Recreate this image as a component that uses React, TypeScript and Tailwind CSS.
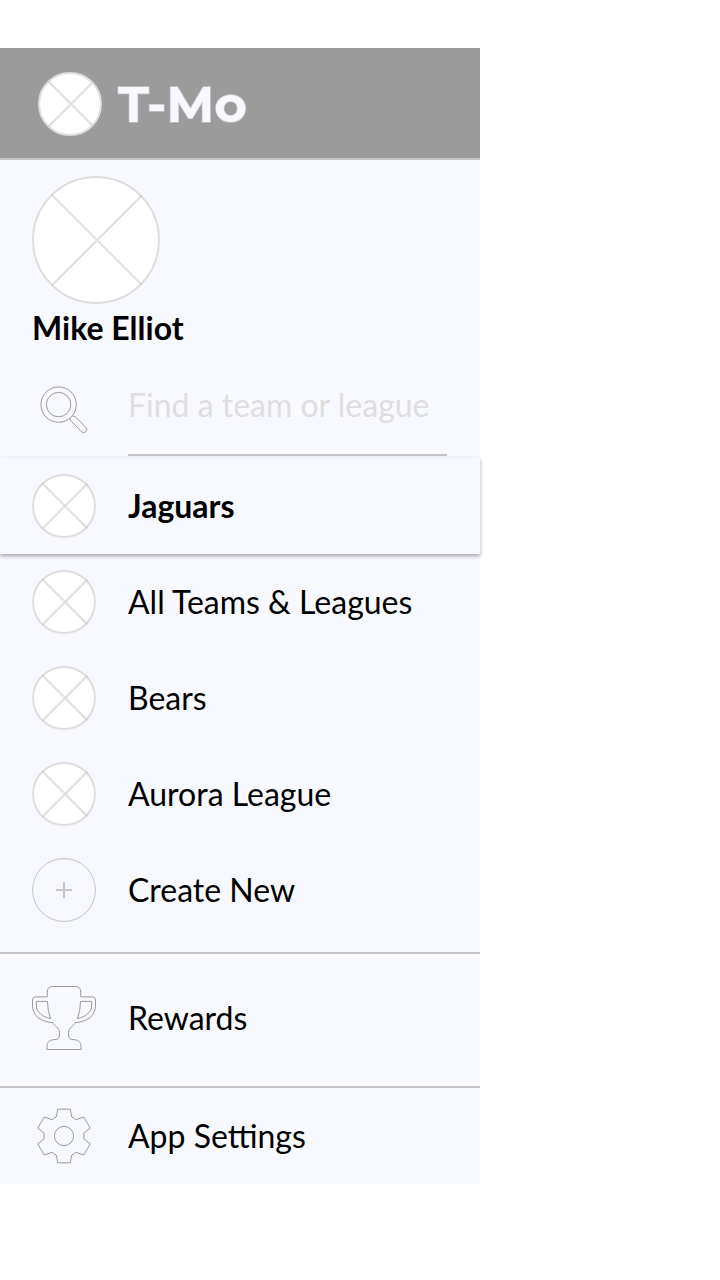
import React from "react";

function Placeholder({ size = "small" }: { size?: "small" | "large" }) {
  if (size === "large") {
    return (
      <svg viewBox="0 0 128 128" className="size-32 shrink-0" fill="none" stroke="#dedede" strokeWidth="2">
        <circle cx="64" cy="64" r="63" fill="#fff" />
        <path d="M19.7 18.7 109.7 108.7M110 19.3 20 109.3" stroke="#c4c4c4" strokeOpacity=".55" />
      </svg>
    );
  }
  return (
    <svg viewBox="0 0 64 64" className="size-16 shrink-0" fill="none" stroke="#dedede" strokeWidth="2">
      <circle cx="32" cy="32" r="31" fill="#fff" />
      <path d="M10.3 9.3 55.3 54.3M55.3 9.7 10.3 54.7" stroke="#c4c4c4" strokeOpacity=".55" />
    </svg>
  );
}

function SearchIcon() {
  return (
    <svg viewBox="0 0 64 64" className="size-16 shrink-0" fill="none" stroke="#9b9b9b" strokeWidth="1">
      <circle cx="26.6" cy="26.6" r="17.7" />
      <circle cx="26.6" cy="26.6" r="12.2" />
      <path d="M38.2 40.2Q38 42 39.5 43.4L49.6 53.8Q51.8 55.5 53.8 53.7Q55.9 51.5 54 49.4L43.5 39Q42 37.7 40.3 38.2" />
    </svg>
  );
}

function TrophyIcon() {
  return (
    <svg viewBox="0 0 64 64" className="size-16 shrink-0" fill="none" stroke="#9b9b9b" strokeWidth="1">
      <path d="M15.3 10.9V6Q15.3.5 20.8.5H43.2Q48.7.5 48.7 6V10.9H60.3Q63.5 10.9 63.5 14.1V20C63.5 30 54 36.3 43 36.7C42 39.8 36.5 41.5 36.5 46.7V49Q36.5 53.6 41.2 53.6C46 53.6 49 56 49 60V63.5H15V60C15 56 18 53.6 22.8 53.6Q27.5 53.6 27.5 49V46.7C27.5 41.5 22 39.8 21 36.7C10 36.3.5 30 .5 20V14.1Q.5 10.9 3.7 10.9Z" />
      <path d="M4.4 15.4H15.4Q15.6 25 18.6 32.6C10.5 31 4.4 26 4.4 20ZM59.6 15.4H48.6Q48.4 25 45.4 32.6C53.5 31 59.6 26 59.6 20Z" />
    </svg>
  );
}

function GearIcon() {
  return (
    <svg viewBox="0 0 64 64" className="size-16 shrink-0" fill="none" stroke="#9b9b9b" strokeWidth="1" strokeLinejoin="round">
      <path d="M25.7 5.2H38.3L39.8 13Q42 14 43.8 15.7L51.7 13L58.3 24.1L51.8 29.2Q52.1 32 51.8 34.8L58.3 39.9L51.7 51L43.8 48.3Q42 50 39.8 51L38.3 58.8H25.7L24.2 51Q22 50 20.2 48.3L12.3 51L5.7 39.9L12.2 34.8Q11.9 32 12.2 29.2L5.7 24.1L12.3 13L20.2 15.7Q22 14 24.2 13Z" />
      <circle cx="32" cy="32" r="9.6" />
    </svg>
  );
}

function CreateIcon() {
  return (
    <svg viewBox="0 0 64 64" className="size-16 shrink-0" fill="none" stroke="#c4c4c4">
      <circle cx="32" cy="32" r="31.5" />
      <path d="M24 32H40M32 24V40" strokeWidth="2" />
    </svg>
  );
}

function Row({ icon, label, className = "h-24" }: { icon: React.ReactNode; label: string; className?: string }) {
  return (
    <button className={`flex w-full shrink-0 items-center gap-8 px-8 text-left ${className}`}>
      {icon}
      <span className="whitespace-nowrap">{label}</span>
    </button>
  );
}

export default function App() {
  return (
    <div className="h-[1280px] w-[720px] overflow-hidden bg-white pt-12 font-[Lato,sans-serif] text-[32px] leading-10 text-black">
      <aside className="flex h-[1136px] w-[480px] flex-col bg-[#f8f9ff]">
        <header className="flex h-28 shrink-0 items-center gap-4 border-b-2 border-[#c4c4c4] bg-[#9b9b9b] pt-0.5 pl-[38px]">
          <Placeholder />
          <h1 className="pt-0.5 font-[Montserrat,Inter,sans-serif] text-[50px] leading-[58px] font-bold whitespace-nowrap text-[#f8f9ff] [-webkit-text-stroke:1.5px_#c4c4c4] [paint-order:stroke_fill]">
            T-Mo
          </h1>
        </header>
        <section className="flex h-[202px] shrink-0 flex-col px-8 pt-4">
          <Placeholder size="large" />
          <h2 className="mt-1 font-bold whitespace-nowrap">Mike Elliot</h2>
        </section>
        <label className="flex h-24 shrink-0 gap-8 px-8 pt-4">
          <SearchIcon />
          <input
            placeholder="Find a team or league"
            className="h-[78px] w-[319px] border-b-2 border-[#c4c4c4] bg-transparent pb-6 placeholder:text-[#dedede] placeholder:opacity-100"
          />
        </label>
        <nav className="flex flex-col">
          <Row
            icon={<Placeholder />}
            label="Jaguars"
            className="relative h-24 bg-[#f8f9ff] font-bold shadow-[0_2px_4px_rgba(0,0,0,0.35)]"
          />
          <Row icon={<Placeholder />} label="All Teams & Leagues" />
          <Row icon={<Placeholder />} label="Bears" />
          <Row icon={<Placeholder />} label="Aurora League" />
          <Row icon={<CreateIcon />} label="Create New" />
          <div className="mt-3.5 border-y-2 border-[#c4c4c4]">
            <Row icon={<TrophyIcon />} label="Rewards" className="h-[132px] pb-1" />
          </div>
          <Row icon={<GearIcon />} label="App Settings" />
        </nav>
      </aside>
    </div>
  );
}
